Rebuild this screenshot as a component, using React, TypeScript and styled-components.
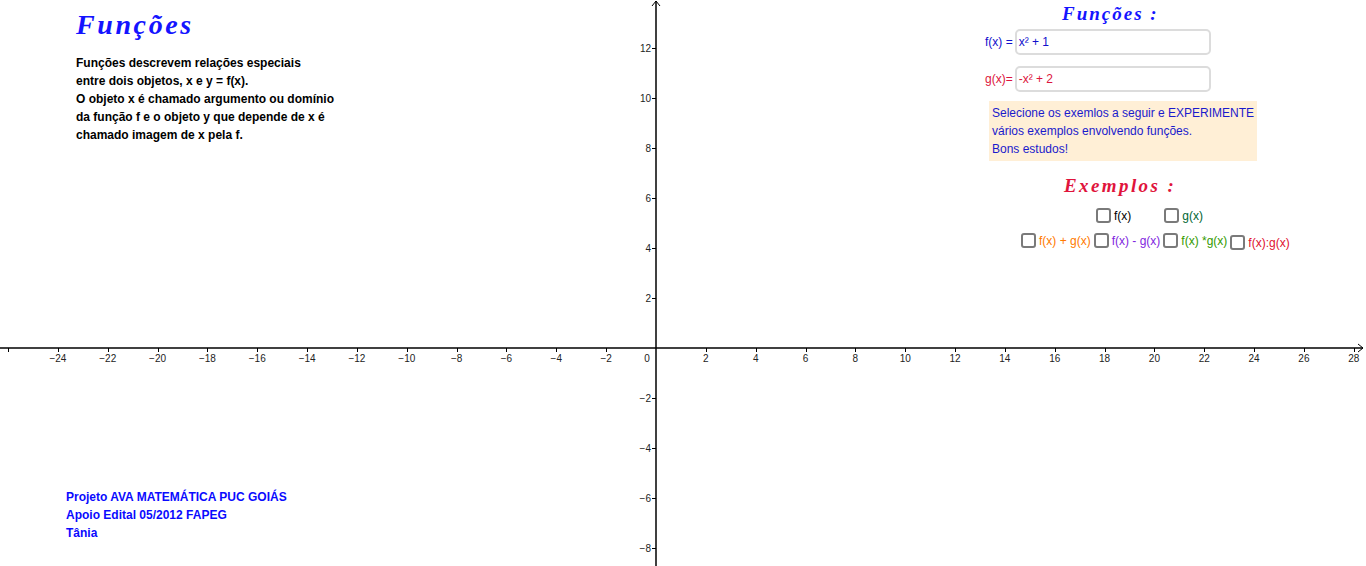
import React from 'react';
import styled, { createGlobalStyle } from 'styled-components';

const GlobalStyle = createGlobalStyle`
  html, body {
    margin: 0;
    padding: 0;
    background: #ffffff;
  }
  body {
    font-family: "Liberation Sans", Arial, sans-serif;
  }
`;

/* Graphics view: the whole applet is one canvas */
const Applet = styled.div`
  position: relative;
  width: 1366px;
  height: 566px;
  overflow: hidden;
  background: #fff;
`;

const Axes = styled.svg`
  position: absolute;
  inset: 0;
  font-family: "Liberation Sans", Arial, sans-serif;
  font-size: 10px;
`;

const IntroBlock = styled.div`
  position: absolute;
  left: 76px;
  top: 8px;
  display: flex;
  flex-direction: column;
`;

const MathTitle = styled.h1<{ $color: string; $size: number; $spacing: number }>`
  margin: 0;
  font-family: "Liberation Serif", "Times New Roman", serif;
  font-style: italic;
  font-weight: bold;
  font-size: ${p => p.$size}px;
  letter-spacing: ${p => p.$spacing}px;
  color: ${p => p.$color};
  line-height: 1.2;
`;

const Paragraph = styled.p<{ $color: string }>`
  margin: 0;
  font-size: 12px;
  font-weight: bold;
  line-height: 18px;
  color: ${p => p.$color};
`;

const Intro = styled(Paragraph)`
  margin-top: 12px;
`;

const Credits = styled.div`
  position: absolute;
  left: 66px;
  top: 488px;
`;

const FunctionsPanel = styled.div`
  position: absolute;
  left: 985px;
  top: 2px;
  width: 272px;
  display: flex;
  flex-direction: column;
`;

const PanelTitle = styled(MathTitle)<{ $indent: number }>`
  margin-left: ${p => p.$indent}px;
  line-height: 24px;
`;

const InputRow = styled.label<{ $color: string }>`
  display: flex;
  align-items: center;
  margin-top: 3px;
  margin-bottom: 8px;
  font-size: 12px;
  color: ${p => p.$color};
`;

const InputBox = styled.div<{ $color: string }>`
  margin-left: 2px;
  width: 190px;
  height: 22px;
  border: 2px solid #dcdcdc;
  border-radius: 5px;
  display: flex;
  align-items: center;
  padding-left: 2px;
  font-size: 12px;
  color: ${p => p.$color};
  background: #fff;
`;

const Note = styled.div`
  margin-top: 1px;
  margin-left: 4px;
  width: 265px;
  padding: 3px 0 3px 3px;
  background: #ffefd6;
  color: #1a1acc;
  font-size: 12px;
  line-height: 18px;
`;

const ExamplesPanel = styled.div`
  position: absolute;
  left: 1021px;
  top: 174px;
  display: flex;
  flex-direction: column;
`;

const CheckRow = styled.div<{ $indent: number; $gap: number; $top: number }>`
  display: flex;
  align-items: center;
  gap: ${p => p.$gap}px;
  margin-left: ${p => p.$indent}px;
  margin-top: ${p => p.$top}px;
`;

const CheckItem = styled.label<{ $color: string; $drop?: number }>`
  display: flex;
  align-items: center;
  gap: 3px;
  font-size: 12px;
  color: ${p => p.$color};
  transform: translateY(${p => p.$drop ?? 0}px);
`;

const Box = styled.span`
  width: 11px;
  height: 11px;
  border: 2px solid #7a7a7a;
  border-radius: 3px;
  background: #fff;
`;

const X0 = 656;
const Y0 = 348;
const UX = 24.92;
const UY = 25;

function fmt(n: number) {
  return n < 0 ? '\u2212' + Math.abs(n) : String(n);
}

function Graph() {
  const xs: number[] = [];
  for (let k = -26; k <= 28; k += 2) if (k !== 0) xs.push(k);
  const ys: number[] = [];
  for (let k = -8; k <= 12; k += 2) if (k !== 0) ys.push(k);
  return (
    <Axes width="1366" height="566" viewBox="0 0 1366 566">
      <g stroke="#000" strokeWidth="1.5" fill="none">
        <line x1="0" y1={Y0} x2="1363" y2={Y0} />
        <polyline points={`1358,${Y0 - 4} 1363,${Y0} 1358,${Y0 + 4}`} strokeWidth="1" />
        <line x1={X0} y1="1" x2={X0} y2="566" />
        <polyline points={`${X0 - 4},6 ${X0},1 ${X0 + 4},6`} strokeWidth="1" />
      </g>
      <g stroke="#000" strokeWidth="1">
        {xs.map(k => {
          const x = Math.round(X0 + k * UX) + 0.5;
          return <line key={k} x1={x} y1={Y0} x2={x} y2={Y0 + 4} />;
        })}
        {ys.map(k => {
          const y = Y0 - k * UY + 0.5;
          return <line key={k} x1={X0 - 4} y1={y} x2={X0} y2={y} />;
        })}
      </g>
      <g fill="#222">
        {xs.filter(k => k > -26).map(k => (
          <text key={k} x={X0 + k * UX} y={Y0 + 14} textAnchor="middle">
            {fmt(k)}
          </text>
        ))}
        <text x={X0 - 9} y={Y0 + 14} textAnchor="middle">0</text>
        {ys.map(k => (
          <text key={k} x={X0 - 5} y={Y0 - k * UY + 4} textAnchor="end">
            {fmt(k)}
          </text>
        ))}
      </g>
    </Axes>
  );
}

const checks = [
  { label: 'f(x) + g(x)', color: '#ff7a00' },
  { label: 'f(x) - g(x)', color: '#7f1fe0' },
  { label: 'f(x) *g(x)', color: '#339a00' },
  { label: 'f(x):g(x)', color: '#e0102e', drop: 2 },
];

export default function App() {
  return (
    <>
      <GlobalStyle />
      <Applet>
        <Graph />

        <IntroBlock>
          <MathTitle $color="#1414ff" $size={28} $spacing={2.6}>Funções</MathTitle>
          <Intro $color="#000">
            Funções descrevem relações especiais
            <br />
            entre dois objetos, x e y = f(x).
            <br />
            O objeto x é chamado argumento ou domínio
            <br />
            da função f e o objeto y que depende de x é
            <br />
            chamado imagem de x pela f.
          </Intro>
        </IntroBlock>

        <Credits>
          <Paragraph $color="#0a0aff">
            Projeto AVA MATEMÁTICA PUC GOIÁS
            <br />
            Apoio Edital 05/2012 FAPEG
            <br />
            Tânia
          </Paragraph>
        </Credits>

        <FunctionsPanel>
          <PanelTitle $color="#1414ff" $size={19} $spacing={2} $indent={77}>Funções :</PanelTitle>
          <InputRow $color="#1010cc">
            f(x) =
            <InputBox $color="#1010cc">x² + 1</InputBox>
          </InputRow>
          <InputRow $color="#dc143c">
            g(x)=
            <InputBox $color="#dc143c">-x² + 2</InputBox>
          </InputRow>
          <Note>
            Selecione os exemlos a seguir e EXPERIMENTE
            <br />
            vários exemplos envolvendo funções.
            <br />
            Bons estudos!
          </Note>
        </FunctionsPanel>

        <ExamplesPanel>
          <PanelTitle $color="#e0143c" $size={19} $spacing={2.4} $indent={43}>Exemplos :</PanelTitle>
          <CheckRow $indent={75} $gap={33} $top={10}>
            <CheckItem $color="#000">
              <Box />
              f(x)
            </CheckItem>
            <CheckItem $color="#006633">
              <Box />
              g(x)
            </CheckItem>
          </CheckRow>
          <CheckRow $indent={0} $gap={3} $top={10}>
            {checks.map(c => (
              <CheckItem key={c.label} $color={c.color} $drop={c.drop}>
                <Box />
                {c.label}
              </CheckItem>
            ))}
          </CheckRow>
        </ExamplesPanel>
      </Applet>
    </>
  );
}
